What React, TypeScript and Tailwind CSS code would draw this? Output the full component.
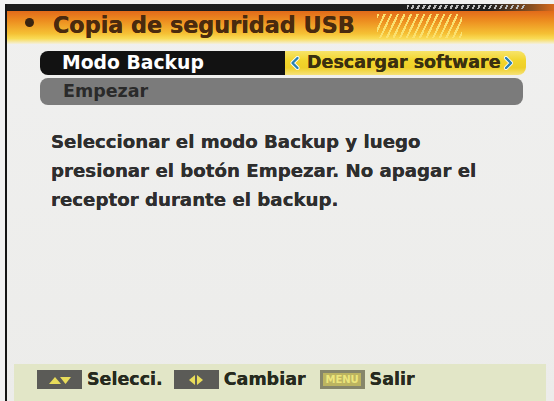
export default function App() {
  const f = "font-['DejaVu_Sans',sans-serif] font-bold";
  return (
    <div className="w-[554px] h-[401px] bg-[#f1f1f1] pl-[5px] pt-[4px] overflow-hidden">
      <div className="h-full border-l-2 border-[#141414] flex flex-col bg-[linear-gradient(to_bottom,#f0f0ef,#ececea)]">
        {/* top dark band */}
        <div className="h-[7px] shrink-0 flex bg-[linear-gradient(to_right,#1b1b1b_0%,#1f1f1f_88%,#8a5020_96%,#d86a1c_100%)]">
          <div className="ml-[400px] mt-[1px] w-[120px] h-[4px] bg-[repeating-linear-gradient(115deg,#bdbdbd_0_2px,transparent_2px_5px)]" />
        </div>
        {/* header */}
        <div className="h-[33px] shrink-0 flex items-start bg-[linear-gradient(to_bottom,#e26a1a_0%,#ed8e20_30%,#f5c034_68%,#f9dc56_84%,#f4f0de_100%)]">
          <div className="ml-[18px] mt-[7px] w-[9px] h-[9px] rounded-full bg-[#3a2410]" />
          <div className={`${f} ml-[19px] text-[22.3px] leading-[29px] text-[#4a2a0e] whitespace-nowrap [text-shadow:0_0_0.5px_#4a2a0e]`}>
            Copia de seguridad USB
          </div>
          <div className="ml-[22px] mt-[3px] w-[85px] h-[24px] bg-[repeating-linear-gradient(115deg,#fae170_0_2px,transparent_2px_6px)]" />
        </div>

        {/* menu rows */}
        <div className="ml-[33px] mt-[7px] flex flex-col">
          <div className="flex h-[24px]">
            <div className={`${f} w-[245px] rounded-l-[8px] bg-[#121212] text-white text-[18.8px] leading-none flex items-center pl-[22px]`}>
              Modo Backup
            </div>
            <div className={`${f} w-[241px] rounded-r-[8px] bg-[linear-gradient(to_bottom,#f7e46a,#f2d52c_40%,#efcf28_70%,#f6e27a)] text-[#3a3010] text-[17.5px] leading-none flex items-center pl-[5px] [text-shadow:0_0_0.5px_#3a3010]`}>
              <svg width="10" height="14" viewBox="0 0 10 14" className="shrink-0">
                <path d="M7.5 2 L2.5 7 L7.5 12" fill="none" stroke="#ffffff" strokeWidth="4" strokeLinecap="round" strokeLinejoin="round" />
                <path d="M7.5 2 L2.5 7 L7.5 12" fill="none" stroke="#2a82b0" strokeWidth="2.4" strokeLinecap="round" strokeLinejoin="round" />
              </svg>
              <span className="ml-[7px] whitespace-nowrap">Descargar software</span>
              <svg width="11" height="14" viewBox="0 0 11 14" className="shrink-0 ml-[2px]">
                <path d="M3 2 L8 7 L3 12" fill="none" stroke="#ffffff" strokeWidth="4" strokeLinecap="round" strokeLinejoin="round" />
                <path d="M3 2 L8 7 L3 12" fill="none" stroke="#2a82b0" strokeWidth="2.4" strokeLinecap="round" strokeLinejoin="round" />
              </svg>
            </div>
          </div>
          <div className={`${f} mt-[3px] h-[27px] w-[483px] rounded-[8px] bg-[#7b7b7b] text-[#2a2a2a] text-[17.5px] leading-none flex items-center pl-[23px]`}>
            Empezar
          </div>
        </div>

        {/* description */}
        <div className={`${f} mt-[22px] pl-[44px] text-[18.2px] leading-[29px] text-[#2e2e2e] [text-shadow:0_0_0.5px_#2e2e2e]`}>
          <div className="whitespace-nowrap">Seleccionar el modo Backup y luego</div>
          <div className="whitespace-nowrap">presionar el botón Empezar. No apagar el</div>
          <div className="whitespace-nowrap">receptor durante el backup.</div>
        </div>

        {/* footer */}
        <div className="mt-auto ml-[7px] w-[532px] h-[37px] shrink-0 bg-[#e2e6c7] pt-[6px] pl-[23px]">
          <div className={`${f} flex items-center h-[19px] text-[17.5px] leading-none text-[#262a1e] [text-shadow:0_0_0.5px_#262a1e]`}>
            <div className="w-[45px] h-[19px] bg-[#5b5b57] flex items-center justify-center">
              <svg width="24" height="10" viewBox="0 0 24 10">
                <path d="M1 9 L7 2 L13 9 Z" fill="#e8dc5a" />
                <path d="M12 2 L23 2 L17.5 9 Z" fill="#e8dc5a" />
              </svg>
            </div>
            <span className="ml-[5px] whitespace-nowrap">Selecci.</span>
            <div className="ml-[11px] w-[45px] h-[19px] bg-[#5b5b57] flex items-center justify-center">
              <svg width="20" height="12" viewBox="0 0 20 12">
                <path d="M9 1 L3 6 L9 11 Z" fill="#e8dc5a" />
                <path d="M11 1 L17 6 L11 11 Z" fill="#e8dc5a" />
              </svg>
            </div>
            <span className="ml-[5px] whitespace-nowrap">Cambiar</span>
            <div className="ml-[14px] w-[45px] h-[19px] bg-[#86866a] flex items-center justify-center">
              <div className="h-[13px] px-[2px] bg-[#bcb460] text-[#ece67c] text-[10px] leading-[13px] [text-shadow:none]">MENU</div>
            </div>
            <span className="ml-[5px] whitespace-nowrap">Salir</span>
          </div>
        </div>
      </div>
    </div>
  );
}
